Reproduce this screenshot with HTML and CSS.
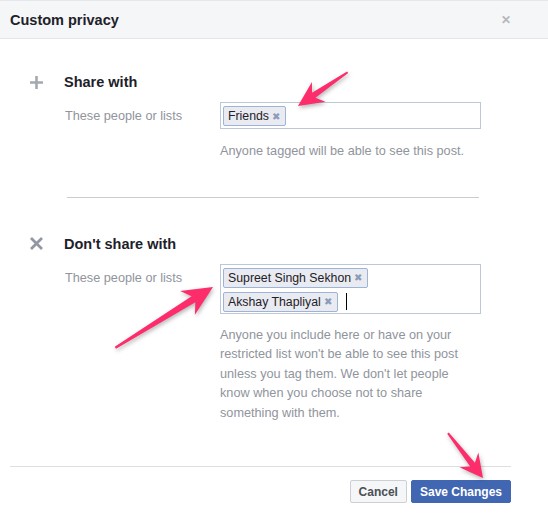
FILE: index.html
```html
<!DOCTYPE html>
<html lang="en">
<head>
  <meta charset="UTF-8" />
  <meta name="viewport" content="width=device-width, initial-scale=1.0"/>
  <title>Custom privacy</title>
  <link rel="stylesheet" href="styles.css">
</head>
<body>
  <div class="dialog">
    <div class="header">
      <h3>Custom privacy</h3>
      <span class="close">&#x2715;</span>
    </div>

    <div class="section share">
      <div class="heading">
        <svg class="icon" width="15" height="15" viewBox="0 0 15 15">
          <path d="M7.5 1v13M1 7.5h13" stroke="#a3a8b1" stroke-width="2.6"/>
        </svg>
        <h4>Share with</h4>
      </div>
      <div class="row">
        <div class="label">These people or lists</div>
        <div class="field">
          <div class="tokens">
            <div class="line">
              <span class="token">Friends<i>&#x2716;</i></span>
            </div>
          </div>
          <p class="help">Anyone tagged will be able to see this post.</p>
        </div>
      </div>
    </div>

    <hr class="divider">

    <div class="section dont">
      <div class="heading">
        <svg class="icon" width="15" height="15" viewBox="0 0 15 15">
          <path d="M2 2l11 11M13 2L2 13" stroke="#9197a3" stroke-width="2.8"/>
        </svg>
        <h4>Don't share with</h4>
      </div>
      <div class="row">
        <div class="label">These people or lists</div>
        <div class="field">
          <div class="tokens">
            <div class="line">
              <span class="token">Supreet Singh Sekhon<i>&#x2716;</i></span>
            </div>
            <div class="line">
              <span class="token">Akshay Thapliyal<i>&#x2716;</i></span>
              <span class="caret"></span>
            </div>
          </div>
          <p class="help">Anyone you include here or have on your restricted list won't be able to see this post unless you tag them. We don't let people know when you choose not to share something with them.</p>
        </div>
      </div>
    </div>

    <div class="footer">
      <button class="btn">Cancel</button>
      <button class="btn primary">Save Changes</button>
    </div>

    <!-- annotation arrows -->
    <svg class="arrows" width="548" height="513" viewBox="0 0 548 513">
      <g fill="#fd2c6b">
        <polygon transform="translate(298,106) rotate(145.8)" points="0,0 -25,-12 -19,-3 -60,-1 -60,1 -19,3 -25,12"/>
        <polygon transform="translate(213,287) rotate(-31.9)" points="0,0 -30,-14 -23,-3.5 -115,-1.2 -115,1.2 -23,3.5 -30,14"/>
        <polygon transform="translate(483,478) rotate(52.1)" points="0,0 -23,-12 -17,-3 -57,-1 -57,1 -17,3 -23,12"/>
      </g>
    </svg>
  </div>
</body>
</html>
```

FILE: styles.css
```css
* {
  box-sizing: border-box;
  margin: 0;
  padding: 0;
}
body {
  font-family: 'Liberation Sans', Arial, sans-serif;
  background: #fff;
  color: #1d2129;
}
.dialog {
  position: relative;
  width: 548px;
  height: 513px;
  background: #fff;
}
.header {
  display: flex;
  justify-content: space-between;
  align-items: center;
  height: 39px;
  padding: 0 37px 0 10px;
  background: #f5f6f7;
  border-top: 1px solid #e6e7ea;
  border-bottom: 1px solid #e5e5e5;
}
.header h3 {
  font-size: 14.5px;
  font-weight: bold;
  color: #1d2129;
}
.close {
  font-size: 12px;
  font-weight: bold;
  color: #b4b7bc;
}
.section {
  padding: 35px 0 0 29px;
}
.section.dont {
  padding-top: 38px;
}
.heading {
  display: flex;
  align-items: center;
  gap: 20px;
}
.heading h4 {
  font-size: 14.5px;
  font-weight: bold;
  color: #1d2129;
}
.row {
  display: flex;
  margin-top: 12px;
  padding-left: 36px;
}
.label {
  width: 155px;
  padding-top: 7px;
  font-size: 12.7px;
  color: #90949c;
}
.field {
  width: 261px;
}
.tokens {
  display: flex;
  flex-direction: column;
  gap: 4px;
  min-height: 27px;
  padding: 3px 2px 1px;
  border: 1px solid #bdc7d8;
}
.line {
  display: flex;
  align-items: center;
}
.token {
  display: inline-flex;
  align-items: center;
  height: 20px;
  padding: 0 5px 0 4px;
  font-size: 12.3px;
  color: #1d2129;
  background: #e9ebf0;
  border: 1px solid #9cb4d8;
  border-radius: 2px;
}
.token i {
  font-style: normal;
  font-size: 9.5px;
  margin-left: 3px;
  color: #8b9cbb;
}
.caret {
  display: inline-block;
  width: 1px;
  height: 17px;
  margin-left: 8px;
  background: #000;
}
.help {
  margin-top: 13px;
  width: 248px;
  font-size: 12.7px;
  line-height: 19.5px;
  color: #90949c;
}
.dont .help {
  margin-top: 12px;
}
.divider {
  margin: 35px 69px 0 67px;
  border: none;
  border-top: 1px solid #cccccc;
}
.footer {
  position: absolute;
  left: 10px;
  right: 37px;
  top: 466px;
  display: flex;
  justify-content: flex-end;
  gap: 4px;
  padding-top: 13px;
  border-top: 1px solid #dddfe2;
}
.btn {
  height: 23px;
  padding: 0 8px;
  font-family: inherit;
  font-size: 12px;
  font-weight: bold;
  color: #4b4f56;
  background: #f5f6f7;
  border: 1px solid #ccd0d5;
  border-radius: 2px;
}
.btn.primary {
  color: #fff;
  background: #4267b2;
  border-color: #4267b2;
}
.arrows {
  position: absolute;
  top: 0;
  left: 0;
  pointer-events: none;
  filter: drop-shadow(1px 2px 2px rgba(0, 0, 0, 0.3));
}
```
